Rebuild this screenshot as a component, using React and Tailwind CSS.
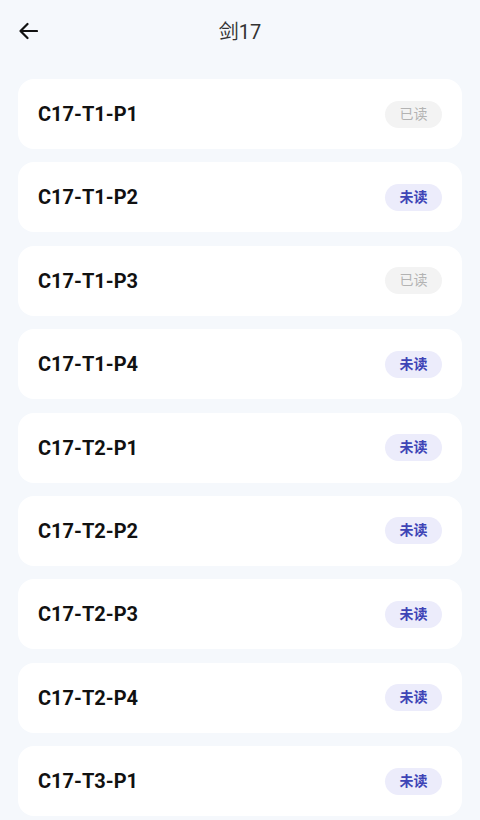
import React from "react";

const items = [
  { title: "C17-T1-P1", read: true },
  { title: "C17-T1-P2", read: false },
  { title: "C17-T1-P3", read: true },
  { title: "C17-T1-P4", read: false },
  { title: "C17-T2-P1", read: false },
  { title: "C17-T2-P2", read: false },
  { title: "C17-T2-P3", read: false },
  { title: "C17-T2-P4", read: false },
  { title: "C17-T3-P1", read: false },
];

export default function App() {
  return (
    <div
      className="min-h-[820px] bg-[#f5f8fc] overflow-hidden"
      style={{ fontFamily: "Roboto, 'Noto Sans CJK SC', sans-serif" }}
    >
      {/* header */}
      <div className="relative h-[64px] flex items-center justify-center">
        <button className="absolute left-[18px] top-[21px] w-[20px] h-[20px]">
          <svg width="20" height="20" viewBox="0 0 20 20" fill="none">
            <path
              d="M19 10H2.5M9.5 3L2.5 10L9.5 17"
              stroke="#111"
              strokeWidth="2.2"
              strokeLinecap="round"
              strokeLinejoin="round"
            />
          </svg>
        </button>
        <h1 className="text-[20px] text-[#333] font-normal">剑17</h1>
      </div>

      <div className="px-[18px] pt-[15px] flex flex-col gap-[13.4px]">
        {items.map((item) => (
          <div
            key={item.title}
            className="h-[70px] bg-white rounded-[16px] flex items-center justify-between pl-[20px] pr-[20px]"
          >
            <span className="text-[20px] font-bold text-[#111]">{item.title}</span>
            {item.read ? (
              <span className="w-[57px] h-[27px] rounded-full bg-[#f3f3f3] text-[#b3b3b3] text-[14px] flex items-center justify-center">
                已读
              </span>
            ) : (
              <span className="w-[57px] h-[27px] rounded-full bg-[#ececfb] text-[#3e44b6] text-[14px] font-semibold flex items-center justify-center">
                未读
              </span>
            )}
          </div>
        ))}
      </div>
    </div>
  );
}
